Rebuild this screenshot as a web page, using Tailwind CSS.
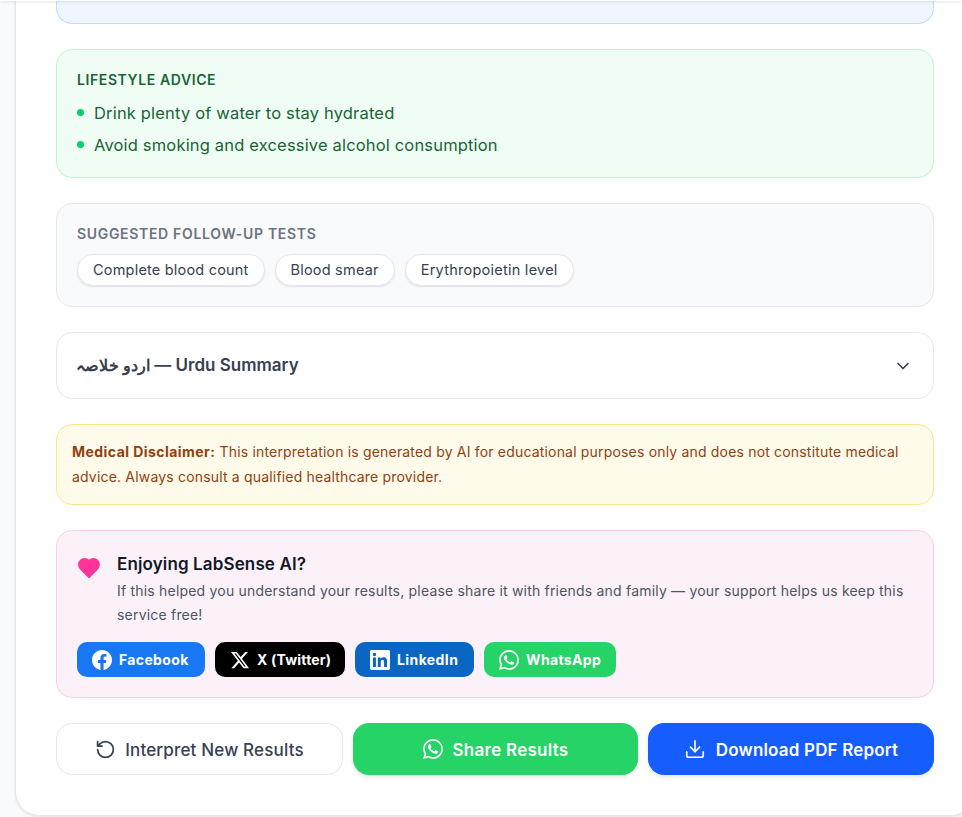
<!DOCTYPE html>
<html lang="en">
<head>
    <meta charset="UTF-8">
    <meta name="viewport" content="width=device-width, initial-scale=1.0">
    <title>LabSense AI</title>
    <script src="https://cdn.jsdelivr.net/npm/@tailwindcss/browser@4"></script>
</head>
<body class="relative h-[817px] overflow-hidden bg-[#f8fafc] font-['Inter',sans-serif]">

    <!-- Sticky header edge -->
    <div class="absolute top-0 left-0 z-10 h-[1px] w-full bg-white shadow-[0_1px_3px_rgba(0,0,0,0.2)]"></div>

    <!-- Result card, scrolled so only its lower part shows -->
    <div class="ml-[15px] flex h-[816px] w-[960px] flex-col gap-[25px] rounded-b-[24px] border-r border-b border-l border-[#e5e7eb] bg-white px-[40px] shadow-[0_1px_3px_rgba(0,0,0,0.1)]">

        <!-- Bottom of the previous box -->
        <div class="h-[24px] shrink-0 rounded-b-[16px] border-r border-b border-l border-[#bfdbfe] bg-[#eff6ff]"></div>

        <!-- Lifestyle advice -->
        <div class="h-[129px] shrink-0 rounded-[16px] border border-[#bbf7d0] bg-[#f0fdf4] px-[20px] pt-[20px]">
            <h3 class="text-[14px] leading-[20px] font-semibold tracking-[0.6px] text-[#166534] uppercase">Lifestyle Advice</h3>
            <ul class="mt-[11px] flex flex-col gap-[8px] text-[16.5px] leading-[24px] tracking-[0.17px] text-[#166534]">
                <li class="flex items-start gap-[10px]"><span class="mt-[8px] h-[7px] w-[7px] shrink-0 rounded-full bg-[#00d26a]"></span>Drink plenty of water to stay hydrated</li>
                <li class="flex items-start gap-[10px]"><span class="mt-[8px] h-[7px] w-[7px] shrink-0 rounded-full bg-[#00d26a]"></span>Avoid smoking and excessive alcohol consumption</li>
            </ul>
        </div>

        <!-- Follow-up tests -->
        <div class="h-[104px] shrink-0 rounded-[16px] border border-[#e5e7eb] bg-[#f9fafb] px-[20px] pt-[20px]">
            <h3 class="text-[14px] leading-[20px] font-semibold tracking-[0.68px] text-[#6b7280] uppercase">Suggested Follow-up Tests</h3>
            <div class="mt-[10px] flex gap-[10px]">
                <span class="rounded-full border border-[#e5e7eb] bg-white px-[15px] py-[5px] text-[14.5px] leading-[20px] tracking-[0.2px] text-[#374151] shadow-[0_1px_2px_rgba(0,0,0,0.1)]">Complete blood count</span>
                <span class="rounded-full border border-[#e5e7eb] bg-white px-[15px] py-[5px] text-[14.5px] leading-[20px] tracking-[0.2px] text-[#374151] shadow-[0_1px_2px_rgba(0,0,0,0.1)]">Blood smear</span>
                <span class="rounded-full border border-[#e5e7eb] bg-white px-[15px] py-[5px] text-[14.5px] leading-[20px] tracking-[0.25px] text-[#374151] shadow-[0_1px_2px_rgba(0,0,0,0.1)]">Erythropoietin level</span>
            </div>
        </div>

        <!-- Urdu summary -->
        <div class="flex h-[67px] shrink-0 items-center justify-between rounded-[16px] border border-[#e5e7eb] bg-white pt-[1px] pr-[20px] pl-[19px]">
            <span class="text-[17px] font-semibold text-[#374151]"><span class="text-[16px]">اردو خلاصہ</span> — Urdu Summary</span>
            <svg class="h-[20px] w-[20px] text-[#374151]" viewBox="0 0 24 24" fill="none" stroke="currentColor" stroke-width="2" stroke-linecap="round" stroke-linejoin="round"><path d="m6 9 6 6 6-6"/></svg>
        </div>

        <!-- Disclaimer -->
        <div class="h-[81px] shrink-0 rounded-[16px] border border-[#fde68a] bg-[#fffbeb] px-[15px] pt-[14px] text-[14px] leading-[25px] tracking-[0.18px] text-[#92400e]">
            <strong class="font-bold tracking-[0.45px]">Medical Disclaimer:</strong> This interpretation is generated by AI for educational purposes only and does not constitute medical advice. Always consult a qualified healthcare provider.
        </div>

        <!-- Share prompt -->
        <div class="h-[168px] shrink-0 rounded-[16px] border border-[#fbcfe8] bg-[#fcf1f9] px-[20px] pt-[20px]">
            <div class="flex gap-[16px]">
                <svg class="mt-[5px] h-[24px] w-[24px] shrink-0 text-[#ff3399]" viewBox="0 0 24 24" fill="currentColor" stroke="currentColor" stroke-width="2" stroke-linecap="round" stroke-linejoin="round"><path d="M19 14c1.49-1.46 3-3.21 3-5.5A5.5 5.5 0 0 0 16.5 3c-1.76 0-3 .5-4.5 2-1.5-1.5-2.74-2-4.500-2A5.5 5.5 0 0 0 2 8.500c0 2.300 1.500 4.050 3 5.500l7 7Z"/></svg>
                <div>
                    <h3 class="mt-[1px] text-[17px] leading-[24px] tracking-[0.13px] font-semibold text-[#111827]">Enjoying LabSense AI?</h3>
                    <p class="mt-[3px] text-[14px] leading-[24px] tracking-[0.2px] text-[#4b5563]">If this helped you understand your results, please share it with friends and family — your support helps us keep this service free!</p>
                </div>
            </div>
            <div class="mt-[15px] flex gap-[10px]">
                <a class="flex h-[35px] w-[128px] items-center gap-[7px] rounded-[10px] bg-[#1877f2] pl-[15px] text-[14px] font-bold tracking-[0.35px] text-white">
                    <svg class="h-[20px] w-[20px]" viewBox="0 0 24 24" fill="currentColor"><path d="M24 12.073c0-6.627-5.373-12-12-12s-12 5.373-12 12c0 5.99 4.388 10.954 10.125 11.854v-8.385H7.078v-3.47h3.047V9.43c0-3.007 1.792-4.669 4.533-4.669 1.312 0 2.686.235 2.686.235v2.953H15.83c-1.491 0-1.956.925-1.956 1.874v2.25h3.328l-.532 3.47h-2.796v8.385C19.612 23.027 24 18.062 24 12.073z"/></svg>
                    Facebook
                </a>
                <a class="flex h-[35px] w-[130px] items-center gap-[7px] rounded-[10px] bg-black pl-[15px] text-[14px] font-bold tracking-[0.2px] text-white">
                    <svg class="h-[20px] w-[20px]" viewBox="0 0 24 24" fill="currentColor"><path d="M18.244 2.25h3.308l-7.227 8.26 8.502 11.24H16.17l-5.214-6.817L4.99 21.75H1.68l7.73-8.835L1.254 2.25H8.08l4.713 6.231zm-1.161 17.52h1.833L7.084 4.126H5.117z"/></svg>
                    X (Twitter)
                </a>
                <a class="flex h-[35px] w-[119px] items-center gap-[7px] rounded-[10px] bg-[#0a66c2] pl-[15px] text-[14px] font-bold tracking-[0.4px] text-white">
                    <svg class="h-[20px] w-[20px]" viewBox="0 0 24 24" fill="currentColor"><path d="M20.447 20.452h-3.554v-5.569c0-1.328-.027-3.037-1.852-3.037-1.853 0-2.136 1.445-2.136 2.939v5.667H9.351V9h3.414v1.561h.046c.477-.9 1.637-1.85 3.37-1.85 3.601 0 4.267 2.37 4.267 5.455v6.286zM5.337 7.433c-1.144 0-2.063-.926-2.063-2.065 0-1.138.92-2.063 2.063-2.063 1.14 0 2.064.925 2.064 2.063 0 1.139-.925 2.065-2.064 2.065zm1.782 13.019H3.555V9h3.564v11.452zM22.225 0H1.771C.792 0 0 .774 0 1.729v20.542C0 23.227.792 24 1.771 24h20.451C23.2 24 24 23.227 24 22.271V1.729C24 .774 23.2 0 22.222 0h.003z"/></svg>
                    LinkedIn
                </a>
                <a class="flex h-[35px] w-[132px] items-center gap-[7px] rounded-[10px] bg-[#25d366] pl-[15px] text-[14px] font-bold tracking-[0.35px] text-white">
                    <svg class="h-[20px] w-[20px]" viewBox="0 0 24 24" fill="currentColor"><path d="M17.472 14.382c-.297-.149-1.758-.867-2.03-.967-.273-.099-.471-.148-.67.15-.197.297-.767.966-.94 1.164-.173.199-.347.223-.644.075-.297-.15-1.255-.463-2.39-1.475-.883-.788-1.48-1.761-1.653-2.059-.173-.297-.018-.458.13-.606.134-.133.298-.347.446-.52.149-.174.198-.298.298-.497.099-.198.05-.371-.025-.52-.075-.149-.669-1.612-.916-2.207-.242-.579-.487-.5-.669-.51-.173-.008-.371-.01-.57-.01-.198 0-.52.074-.792.372-.272.297-1.04 1.016-1.04 2.479 0 1.462 1.065 2.875 1.213 3.074.149.198 2.096 3.2 5.077 4.487.709.306 1.262.489 1.694.625.712.227 1.36.195 1.871.118.571-.085 1.758-.719 2.006-1.413.248-.694.248-1.289.173-1.413-.074-.124-.272-.198-.57-.347m-5.421 7.403h-.004a9.87 9.87 0 01-5.031-1.378l-.361-.214-3.741.982.998-3.648-.235-.374a9.86 9.86 0 01-1.51-5.26c.001-5.45 4.436-9.884 9.888-9.884 2.64 0 5.122 1.03 6.988 2.898a9.825 9.825 0 012.893 6.994c-.003 5.45-4.437 9.884-9.885 9.884m8.413-18.297A11.815 11.815 0 0012.05 0C5.495 0 .16 5.335.157 11.892c0 2.096.547 4.142 1.588 5.945L.057 24l6.305-1.654a11.882 11.882 0 005.683 1.448h.005c6.554 0 11.89-5.335 11.893-11.893a11.821 11.821 0 00-3.48-8.413z"/></svg>
                    WhatsApp
                </a>
            </div>
        </div>

        <!-- Actions -->
        <div class="grid h-[52px] shrink-0 grid-cols-[287px_285px_286px] gap-[10px]">
            <button class="flex items-center justify-center gap-[9px] rounded-[16px] border border-[#e5e7eb] bg-white text-[17px] font-medium tracking-[0.17px] text-[#374151]">
                <svg class="h-[21px] w-[21px]" viewBox="0 0 24 24" fill="none" stroke="currentColor" stroke-width="2" stroke-linecap="round" stroke-linejoin="round"><path d="M3 12a9 9 0 1 0 9-9 9.75 9.75 0 0 0-6.74 2.74L3 8"/><path d="M3 3v5h5"/></svg>
                <span class="mt-[3px]">Interpret New Results</span>
            </button>
            <button class="flex items-center justify-center gap-[10px] rounded-[16px] bg-[#25d366] text-[17px] font-semibold tracking-[0.26px] text-white shadow-[0_2px_4px_rgba(0,0,0,0.1)]">
                <svg class="h-[20px] w-[20px]" viewBox="0 0 24 24" fill="currentColor"><path d="M17.472 14.382c-.297-.149-1.758-.867-2.03-.967-.273-.099-.471-.148-.67.15-.197.297-.767.966-.94 1.164-.173.199-.347.223-.644.075-.297-.15-1.255-.463-2.39-1.475-.883-.788-1.48-1.761-1.653-2.059-.173-.297-.018-.458.13-.606.134-.133.298-.347.446-.52.149-.174.198-.298.298-.497.099-.198.05-.371-.025-.52-.075-.149-.669-1.612-.916-2.207-.242-.579-.487-.5-.669-.51-.173-.008-.371-.01-.57-.01-.198 0-.52.074-.792.372-.272.297-1.04 1.016-1.04 2.479 0 1.462 1.065 2.875 1.213 3.074.149.198 2.096 3.2 5.077 4.487.709.306 1.262.489 1.694.625.712.227 1.36.195 1.871.118.571-.085 1.758-.719 2.006-1.413.248-.694.248-1.289.173-1.413-.074-.124-.272-.198-.57-.347m-5.421 7.403h-.004a9.87 9.87 0 01-5.031-1.378l-.361-.214-3.741.982.998-3.648-.235-.374a9.86 9.86 0 01-1.51-5.26c.001-5.45 4.436-9.884 9.888-9.884 2.64 0 5.122 1.03 6.988 2.898a9.825 9.825 0 012.893 6.994c-.003 5.45-4.437 9.884-9.885 9.884m8.413-18.297A11.815 11.815 0 0012.05 0C5.495 0 .16 5.335.157 11.892c0 2.096.547 4.142 1.588 5.945L.057 24l6.305-1.654a11.882 11.882 0 005.683 1.448h.005c6.554 0 11.89-5.335 11.893-11.893a11.821 11.821 0 00-3.48-8.413z"/></svg>
                <span class="mt-[3px]">Share Results</span>
            </button>
            <button class="flex items-center justify-center gap-[10px] rounded-[16px] bg-[#155dfc] text-[17px] font-semibold tracking-[0.18px] text-white shadow-[0_2px_4px_rgba(0,0,0,0.1)]">
                <svg class="h-[22px] w-[22px]" viewBox="0 0 24 24" fill="none" stroke="currentColor" stroke-width="1.75" stroke-linecap="round" stroke-linejoin="round"><path d="M21 15v4a2 2 0 0 1-2 2H5a2 2 0 0 1-2-2v-4"/><path d="m7 10 5 5 5-5"/><path d="M12 15V3"/></svg>
                <span class="mt-[3px]">Download PDF Report</span>
            </button>
        </div>
    </div>

</body>
</html>
